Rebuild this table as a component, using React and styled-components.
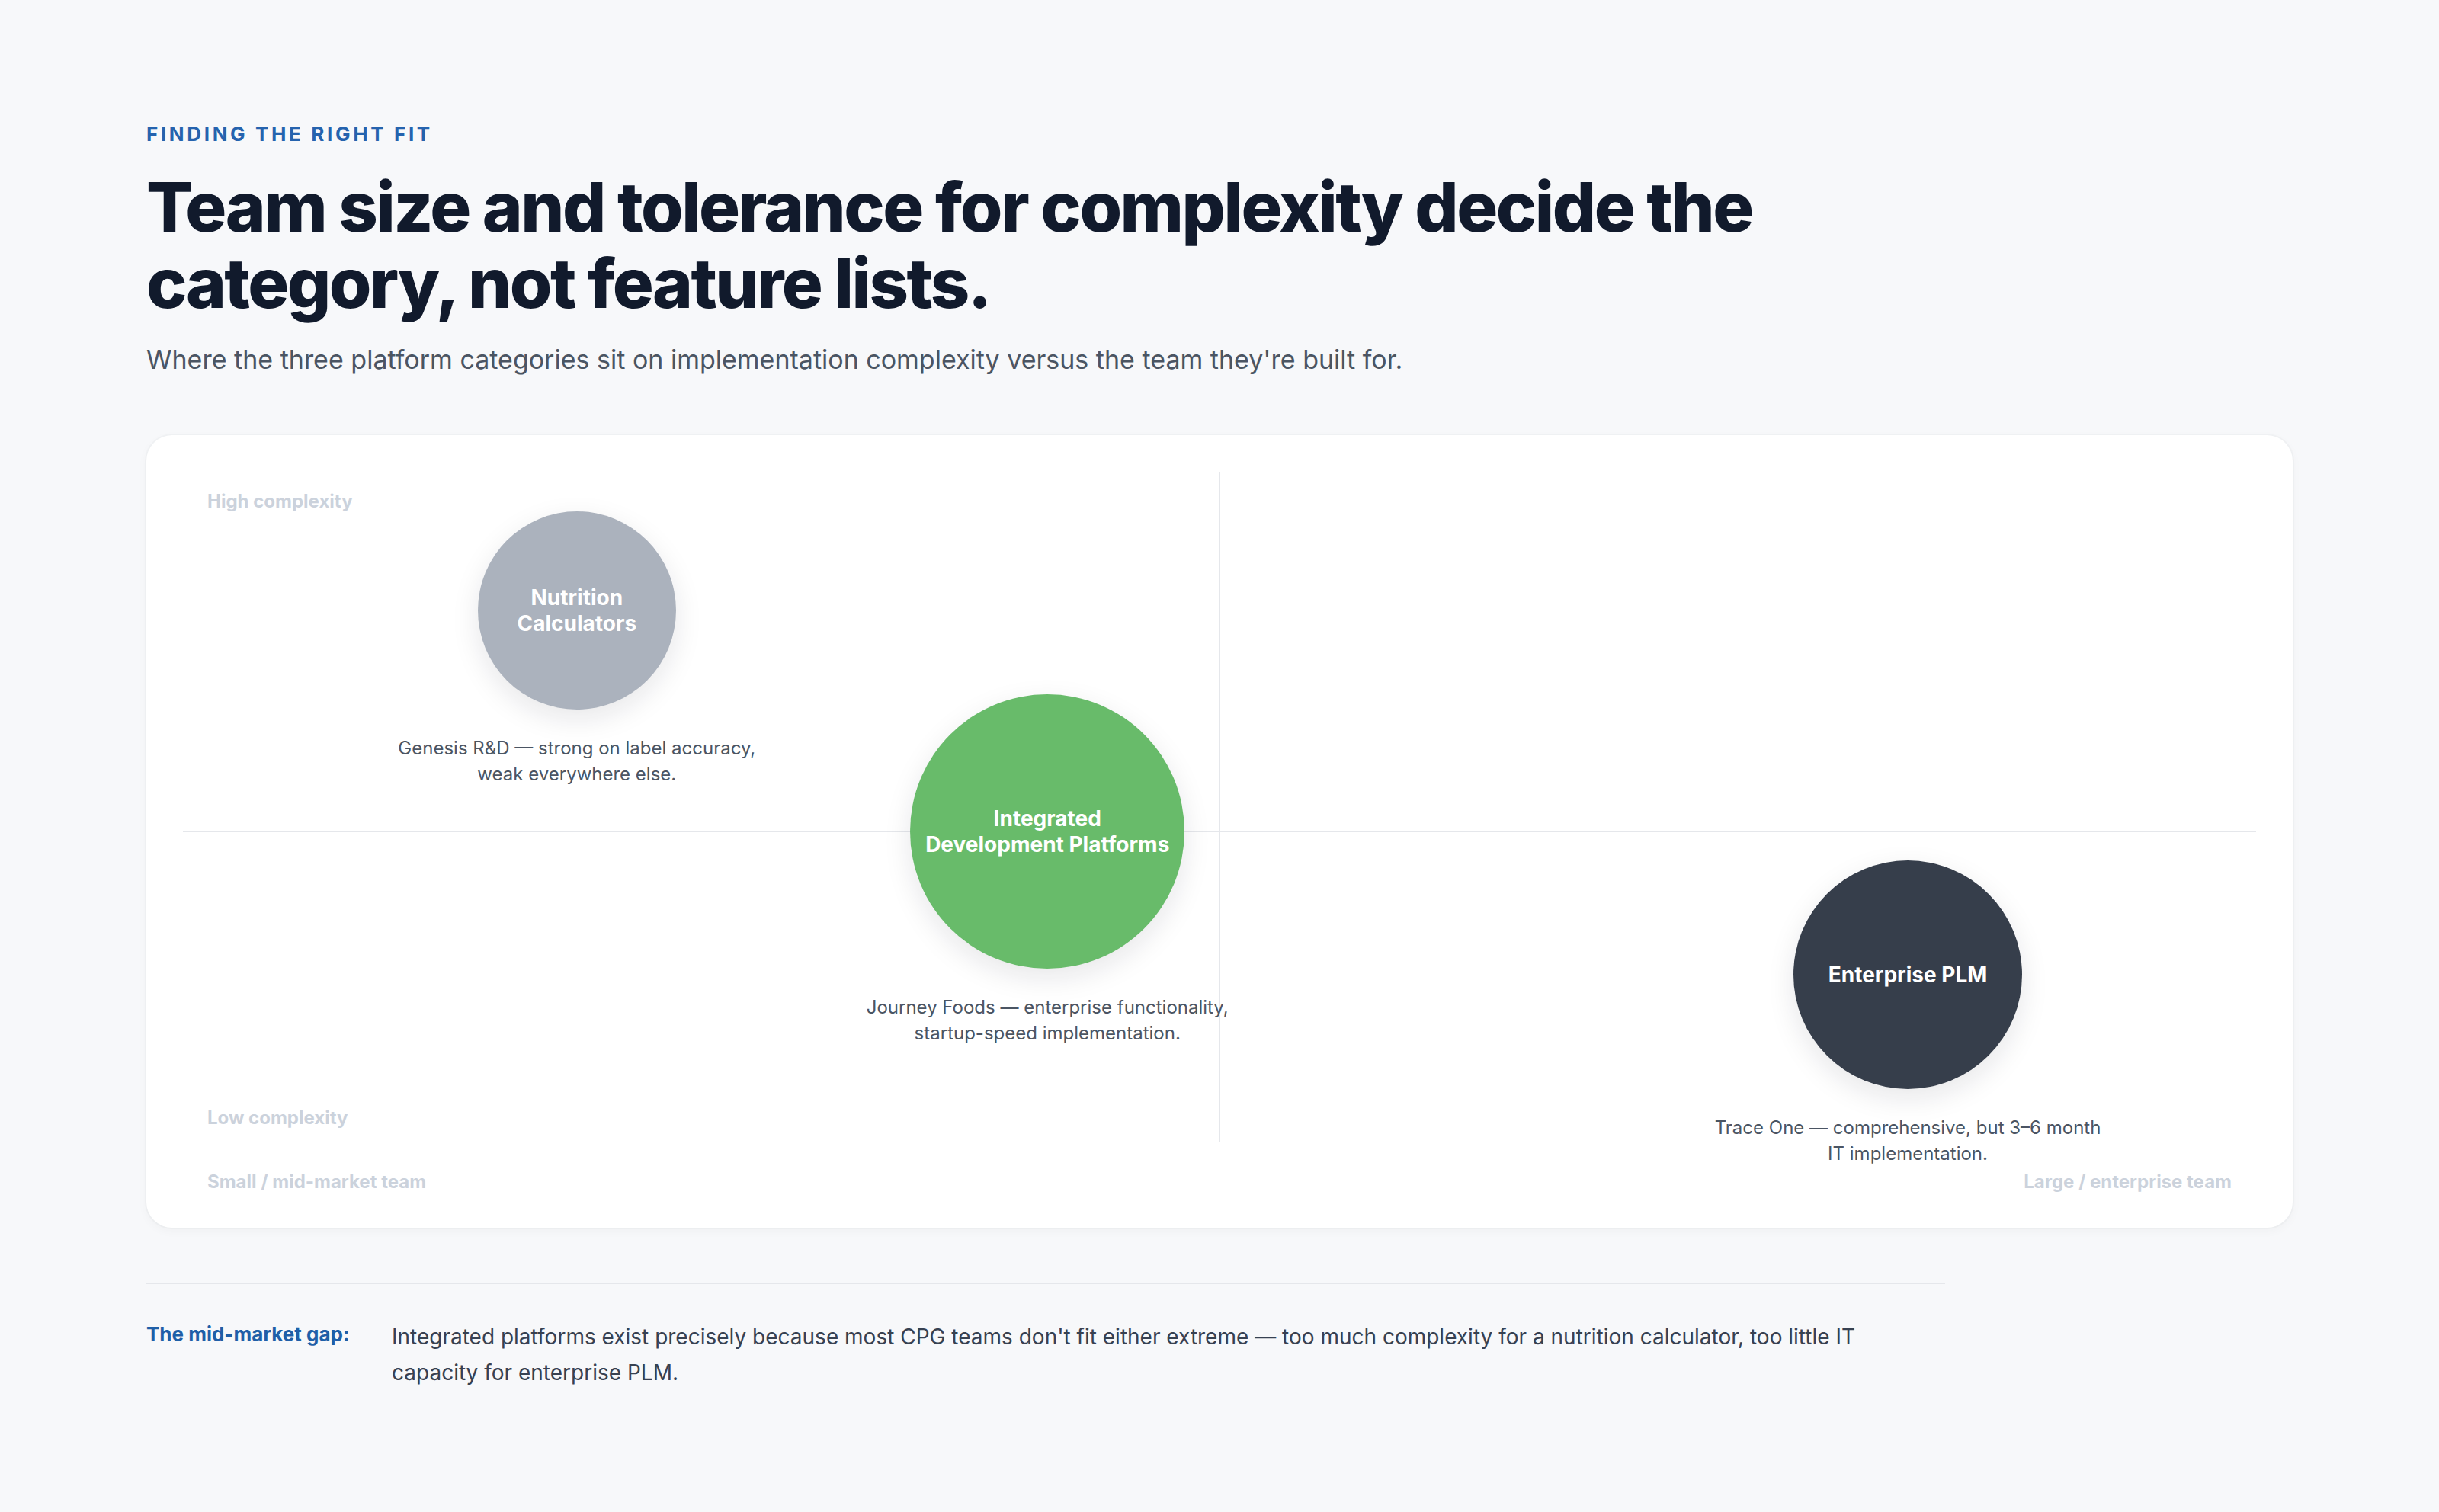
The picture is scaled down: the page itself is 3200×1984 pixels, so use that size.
import React from 'react'
import styled, { createGlobalStyle } from 'styled-components'

const GlobalStyle = createGlobalStyle`
    * { box-sizing: border-box; }
    html, body {
        margin: 0;
        padding: 0;
        background: #f7f8fa;
        font-family: Inter, "Noto Sans", "Liberation Sans", sans-serif;
        -webkit-font-smoothing: antialiased;
    }
`

const Page = styled.main`
    min-height: 1984px;
    padding: 160px 192px 120px;
`
const Eyebrow = styled.p`
    margin: 0;
    font-size: 26px;
    line-height: 32px;
    font-weight: 700;
    letter-spacing: 0.14em;
    text-transform: uppercase;
    color: #2563ae;
`
const Title = styled.h1`
    margin: 30px 0 0;
    max-width: 2360px;
    font-size: 90px;
    line-height: 100px;
    font-weight: 800;
    letter-spacing: -0.028em;
    color: #111a2c;
`
const Subtitle = styled.p`
    margin: 26px 0 0;
    font-size: 34px;
    line-height: 48px;
    color: #4b5563;
`
const Card = styled.section`
    margin-top: 75px;
    padding: 48px;
    background: #ffffff;
    border-radius: 34px;
    box-shadow: 0 0 0 2px rgba(15, 23, 42, 0.025), 0 4px 14px rgba(15, 23, 42, 0.035);
`
const Chart = styled.div`
    position: relative;
    height: 944px;
`
const HLine = styled.div`
    position: absolute;
    left: 0;
    right: 0;
    top: calc(50% - 1px);
    height: 2px;
    background: #e5e7eb;
`
const VLine = styled.div`
    position: absolute;
    top: 0;
    bottom: 64px;
    left: calc(50% - 1px);
    width: 2px;
    background: #e5e7eb;
`
const AxisLabel = styled.span`
    position: absolute;
    font-size: 24px;
    line-height: 32px;
    font-weight: 700;
    color: #cbd2dc;
    white-space: nowrap;
    ${p => p.$top !== undefined && `top: ${p.$top}px;`}
    ${p => p.$bottom !== undefined && `bottom: ${p.$bottom}px;`}
    ${p => p.$right ? 'right: 32px;' : 'left: 32px;'}
`
const Node = styled.div`
    position: absolute;
    width: 560px;
    display: flex;
    flex-direction: column;
    align-items: center;
    transform: translate(-50%, ${p => -p.$size / 2}px);
`
const Bubble = styled.div`
    width: ${p => p.$size}px;
    height: ${p => p.$size}px;
    border-radius: 50%;
    background: ${p => p.$color};
    display: flex;
    align-items: center;
    justify-content: center;
    text-align: center;
    white-space: pre-line;
    font-size: 28px;
    line-height: 34px;
    font-weight: 700;
    letter-spacing: 0;
    color: #ffffff;
    box-shadow: 0 12px 36px rgba(15, 23, 42, 0.10);
`
const Caption = styled.p`
    margin: 34px 0 0;
    max-width: 520px;
    text-align: center;
    white-space: pre-line;
    font-size: 24px;
    line-height: 34px;
    color: #4b5563;
`
const Divider = styled.hr`
    margin: 72px 0 0;
    max-width: 2360px;
    height: 2px;
    border: 0;
    background: #e5e7eb;
`
const Note = styled.div`
    display: grid;
    grid-template-columns: 280px 1fr;
    column-gap: 42px;
    padding-top: 46px;
    max-width: 2360px;
`
const NoteLabel = styled.span`
    font-size: 26px;
    line-height: 40px;
    font-weight: 700;
    color: #1f5fa8;
`
const NoteText = styled.p`
    margin: 0;
    max-width: 1990px;
    font-size: 28px;
    line-height: 47px;
    color: #374151;
`

const categories = [
    {
        name: 'Nutrition\nCalculators',
        caption: 'Genesis R&D — strong on label accuracy,\nweak everywhere else.',
        x: 19, y: 19.3, size: 260, color: '#abb2bd',
    },
    {
        name: 'Integrated\nDevelopment Platforms',
        caption: 'Journey Foods — enterprise functionality,\nstartup-speed implementation.',
        x: 41.7, y: 50, size: 360, color: '#68bb6a',
    },
    {
        name: 'Enterprise PLM',
        caption: 'Trace One — comprehensive, but 3–6 month\nIT implementation.',
        x: 83.2, y: 69.9, size: 300, color: '#363e4b',
    },
]

const App = () => {
    return (
        <>
            <GlobalStyle />
            <Page>
                <Eyebrow>Finding the right fit</Eyebrow>
                <Title>Team size and tolerance for complexity decide the category, not feature lists.</Title>
                <Subtitle>Where the three platform categories sit on implementation complexity versus the team they're built for.</Subtitle>

                <Card>
                    <Chart>
                        <HLine />
                        <VLine />
                        <AxisLabel $top={23}>High complexity</AxisLabel>
                        <AxisLabel $bottom={80}>Low complexity</AxisLabel>
                        <AxisLabel $bottom={-4}>Small / mid-market team</AxisLabel>
                        <AxisLabel $bottom={-4} $right>Large / enterprise team</AxisLabel>

                        {categories.map(c => (
                            <Node key={c.name} $size={c.size} style={{ left: `${c.x}%`, top: `${c.y}%` }}>
                                <Bubble $size={c.size} $color={c.color}>{c.name}</Bubble>
                                <Caption>{c.caption}</Caption>
                            </Node>
                        ))}
                    </Chart>
                </Card>

                <Divider />
                <Note>
                    <NoteLabel>The mid-market gap:</NoteLabel>
                    <NoteText>
                        Integrated platforms exist precisely because most CPG teams don't fit either extreme — too much complexity for a nutrition calculator, too little IT capacity for enterprise PLM.
                    </NoteText>
                </Note>
            </Page>
        </>
    )
}

export default App
